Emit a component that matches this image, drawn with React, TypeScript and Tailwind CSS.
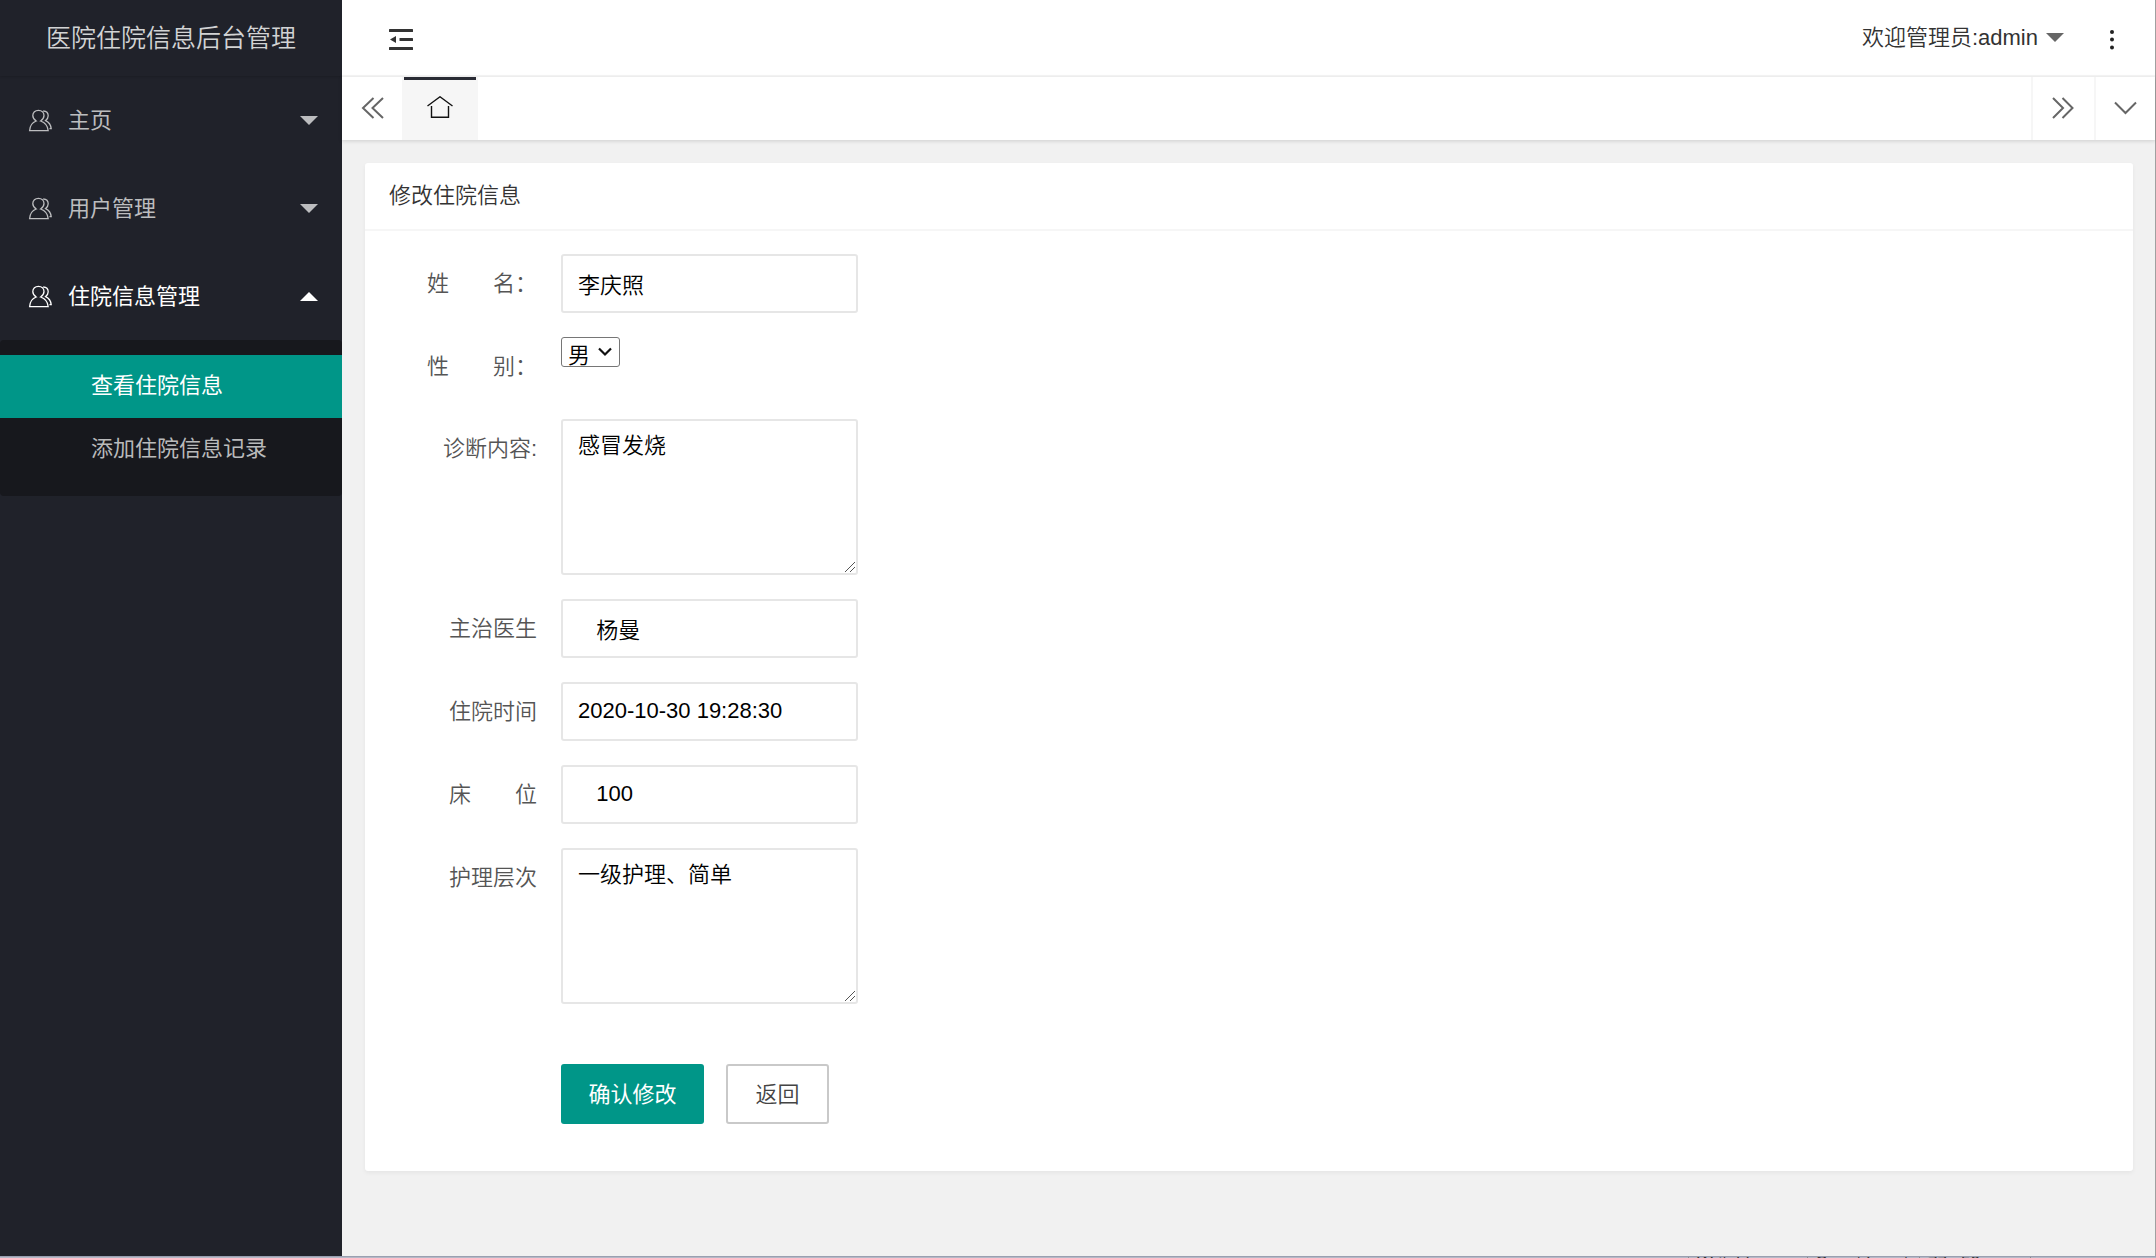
import { useState, type ReactNode } from "react";

function UserIcon() {
    return (
        <svg className="h-6 w-6 shrink-0" viewBox="0 0 24 24" fill="none" stroke="currentColor" strokeWidth="1.3">
            <path d="M8.2 13C6 11.500 4.800 9.700 4.800 7.500C4.800 4.400 7.200 2.300 10.400 2.300S16 4.400 16 7.500C16 9.700 14.800 11.500 12.600 13C17 14.500 19.800 17.500 20.200 22.700H1.600C1.900 17.500 4.200 14.500 8.200 13Z" />
            <path d="M15.200 3C18.600 3.100 20.200 5.200 20.200 7.800C20.200 9.600 19.400 11.200 17.600 12.600C20.800 14 22.800 16.700 23.200 20.600H21.500" />
        </svg>
    );
}

function Caret({ up = false }: { up?: boolean }) {
    return (
        <svg className="h-[9px] w-[18px] shrink-0" viewBox="0 0 18 9" fill="currentColor">
            <path d={up ? "M0 9L9 0L18 9Z" : "M0 0H18L9 9Z"} />
        </svg>
    );
}

function MenuItem({ label, open = false }: { label: string; open?: boolean }) {
    return (
        <a href="#" className={`flex h-[88px] items-center pl-7 pr-6 ${open ? "text-white" : "text-[#bcbdbf]"}`}>
            <UserIcon />
            <span className="ml-4 flex-1">{label}</span>
            <Caret up={open} />
        </a>
    );
}

function Sidebar() {
    return (
        <aside className="w-[342px] shrink-0 bg-[#20222a] text-[22px] font-normal">
            <div className="flex h-[76px] items-center justify-center pt-0.5 text-[25px] font-[350] text-[#d2d3d4] shadow-[0_1px_2px_rgba(0,0,0,0.15)]">
                医院住院信息后台管理
            </div>
            <nav>
                <MenuItem label="主页" />
                <MenuItem label="用户管理" />
                <MenuItem label="住院信息管理" open />
                <div className="rounded-sm bg-[#17181d] py-[15px]">
                    <a href="#" className="flex h-[63px] items-center bg-[#009688] pb-0.5 pl-[91px] text-white">查看住院信息</a>
                    <a href="#" className="flex h-[63px] items-center pb-0.5 pl-[91px] text-[#b9babb]">添加住院信息记录</a>
                </div>
            </nav>
        </aside>
    );
}

function TopBar() {
    return (
        <header className="flex h-[77px] items-center border-b-2 border-[#f6f6f6] bg-white pl-[47px] pr-[31px] text-[#333]">
            <button type="button" aria-label="侧边伸缩">
                <svg className="h-6 w-6" viewBox="0 0 24 24" fill="currentColor">
                    <rect x="0" y="3" width="24" height="3" rx="0.5" />
                    <rect x="10.500" y="12" width="13.500" height="3" rx="0.5" />
                    <rect x="0" y="21" width="24" height="3" rx="0.5" />
                    <path d="M1 13.500L7 10V17Z" />
                </svg>
            </button>
            <a href="#" className="ml-auto flex items-center gap-2">
                欢迎管理员:admin
                <span className="text-[#666]"><Caret /></span>
            </a>
            <button type="button" aria-label="更多" className="ml-9">
                <svg className="h-6 w-6" viewBox="0 0 24 24" fill="#222">
                    <circle cx="12" cy="6" r="2" />
                    <circle cx="12" cy="13.500" r="2" />
                    <circle cx="12" cy="21.500" r="2" />
                </svg>
            </button>
        </header>
    );
}

function TabBar() {
    return (
        <div className="relative flex h-[63px] bg-white text-[#666] shadow-[0_1px_4px_rgba(0,0,0,0.15)]">
            <button type="button" aria-label="向左" className="flex w-[60px] items-center justify-center">
                <svg className="h-6 w-6" viewBox="0 0 24 24" fill="none" stroke="currentColor" strokeWidth="2">
                    <path d="M13.500 1L3 11L13.500 21M23 1L12.500 11L23 21" />
                </svg>
            </button>
            <button type="button" aria-label="首页" className="flex w-[76px] flex-col items-center bg-[#f6f6f6] px-0.5">
                <span className="h-[3px] w-full bg-[#292b34]" />
                <svg className="mt-4 h-6 w-[26px]" viewBox="0 0 26 24" fill="none" stroke="#111" strokeWidth="1.4">
                    <path d="M0.500 10L13 0.800L25.500 10M4.500 10V21.300H21.500V10" />
                </svg>
            </button>
            <button type="button" aria-label="向右" className="ml-auto flex w-[63px] items-center justify-center border-l-2 border-[#f6f6f6]">
                <svg className="h-6 w-6" viewBox="0 0 24 24" fill="none" stroke="currentColor" strokeWidth="2">
                    <path d="M1 1L11 11L1 21M10.500 1L20.500 11L10.500 21" />
                </svg>
            </button>
            <button type="button" aria-label="展开" className="flex w-[61px] items-center justify-center border-l-2 border-[#f6f6f6]">
                <svg className="h-6 w-6" viewBox="0 0 24 24" fill="none" stroke="currentColor" strokeWidth="2">
                    <path d="M1 5.500L11.500 16L22 5.500" />
                </svg>
            </button>
        </div>
    );
}

function Field({ id, label, children }: { id: string; label: string; children: ReactNode }) {
    return (
        <div className="flex items-start">
            <label htmlFor={id} className="h-[58px] w-[172px] shrink-0 whitespace-pre text-right leading-[60px] text-[#555]">{label}</label>
            <div className="relative ml-6 flex">{children}</div>
        </div>
    );
}

function ResizeGrip() {
    return (
        <svg className="pointer-events-none absolute bottom-0.5 right-0.5 h-3 w-3" viewBox="0 0 12 12" fill="none" stroke="#555" strokeWidth="1">
            <path d="M1 11L11 1M6 11L11 6" />
        </svg>
    );
}

const inputClass = "h-[59px] w-[297px] rounded-[3px] border-2 border-[#e6e6e6] bg-white px-[15px] pb-0.5 text-black outline-none";
const areaClass = "block h-[156px] w-[297px] resize rounded-[3px] border-2 border-[#e6e6e6] bg-white px-[15px] py-[11px] leading-7 text-black outline-none [&::-webkit-resizer]:bg-transparent";

function EditForm() {
    const [form, setForm] = useState({
        name: "李庆照",
        sex: "男",
        content: "感冒发烧",
        doctor: "   杨曼",
        time: "2020-10-30 19:28:30",
        bed: "   100",
        level: "一级护理、简单",
    });
    const bind = (key: keyof typeof form) => ({
        id: key,
        value: form[key],
        onChange: (e: { target: { value: string } }) => setForm({ ...form, [key]: e.target.value }),
    });

    return (
        <form className="flex flex-col gap-6 pb-[47px] pt-[23px]" onSubmit={(e) => e.preventDefault()}>
            <Field id="name" label="姓　　名：">
                <input type="text" className={inputClass} {...bind("name")} />
            </Field>
            <Field id="sex" label="性　　别：">
                <select className="h-[30px] w-[59px] appearance-none rounded-[3px] border border-[#767676] bg-white pl-1.5 pt-1.5 leading-6 text-black" {...bind("sex")}>
                    <option>男</option>
                    <option>女</option>
                </select>
                <svg className="pointer-events-none absolute right-2 top-2.5 h-2.5 w-3.5" viewBox="0 0 14 10" fill="none" stroke="#111" strokeWidth="2.2">
                    <path d="M1 1.500L7 7.500L13 1.500" />
                </svg>
            </Field>
            <Field id="content" label="诊断内容:">
                <textarea className={areaClass} {...bind("content")} />
                <ResizeGrip />
            </Field>
            <Field id="doctor" label="主治医生">
                <input type="text" className={inputClass} {...bind("doctor")} />
            </Field>
            <Field id="time" label="住院时间">
                <input type="text" className={inputClass} {...bind("time")} />
            </Field>
            <Field id="bed" label="床　　位">
                <input type="text" className={inputClass} {...bind("bed")} />
            </Field>
            <Field id="level" label="护理层次">
                <textarea className={areaClass} {...bind("level")} />
                <ResizeGrip />
            </Field>
            <div className="mt-9 flex gap-[22px] pl-[196px]">
                <button type="submit" className="h-[60px] w-[143px] rounded-[3px] bg-[#009688] font-normal text-white">确认修改</button>
                <button type="button" className="h-[60px] w-[103px] rounded-[3px] border-2 border-[#c9c9c9] bg-white text-[#444]">返回</button>
            </div>
        </form>
    );
}

// Sliver of the editor window that shows below the browser
function EditorStatus() {
    return (
        <footer className="flex h-0.5 justify-end overflow-hidden border-t border-[#9a9fb0] bg-[#b4b8c6] pr-[125px] text-[17px] leading-3 text-[#333]">
            <span className="w-[119px] border-l border-[#888] pl-2">Writable</span>
            <span className="w-28 border-l border-[#888] pl-2">Smart Insert</span>
            <span className="w-28 border-x border-[#888] pl-2">77 : 50</span>
        </footer>
    );
}

export default function App() {
    return (
        <div className="flex min-h-screen flex-col font-['Liberation_Sans','Noto_Sans_CJK_SC',sans-serif] text-[22px] font-[350]">
            <div className="flex flex-1 border-r border-[#a0a0a0] bg-[#f1f1f1]">
                <Sidebar />
                <div className="min-w-0 flex-1">
                    <TopBar />
                    <TabBar />
                    <main className="py-[23px] pl-[23px] pr-[22px]">
                        <section className="rounded-[3px] bg-white shadow-[0_2px_4px_rgba(0,0,0,0.05)]">
                            <h1 className="flex h-[68px] items-center border-b-2 border-[#f6f6f6] px-6 pb-0.5 text-[#333]">修改住院信息</h1>
                            <EditForm />
                        </section>
                    </main>
                </div>
            </div>
            <EditorStatus />
        </div>
    );
}
